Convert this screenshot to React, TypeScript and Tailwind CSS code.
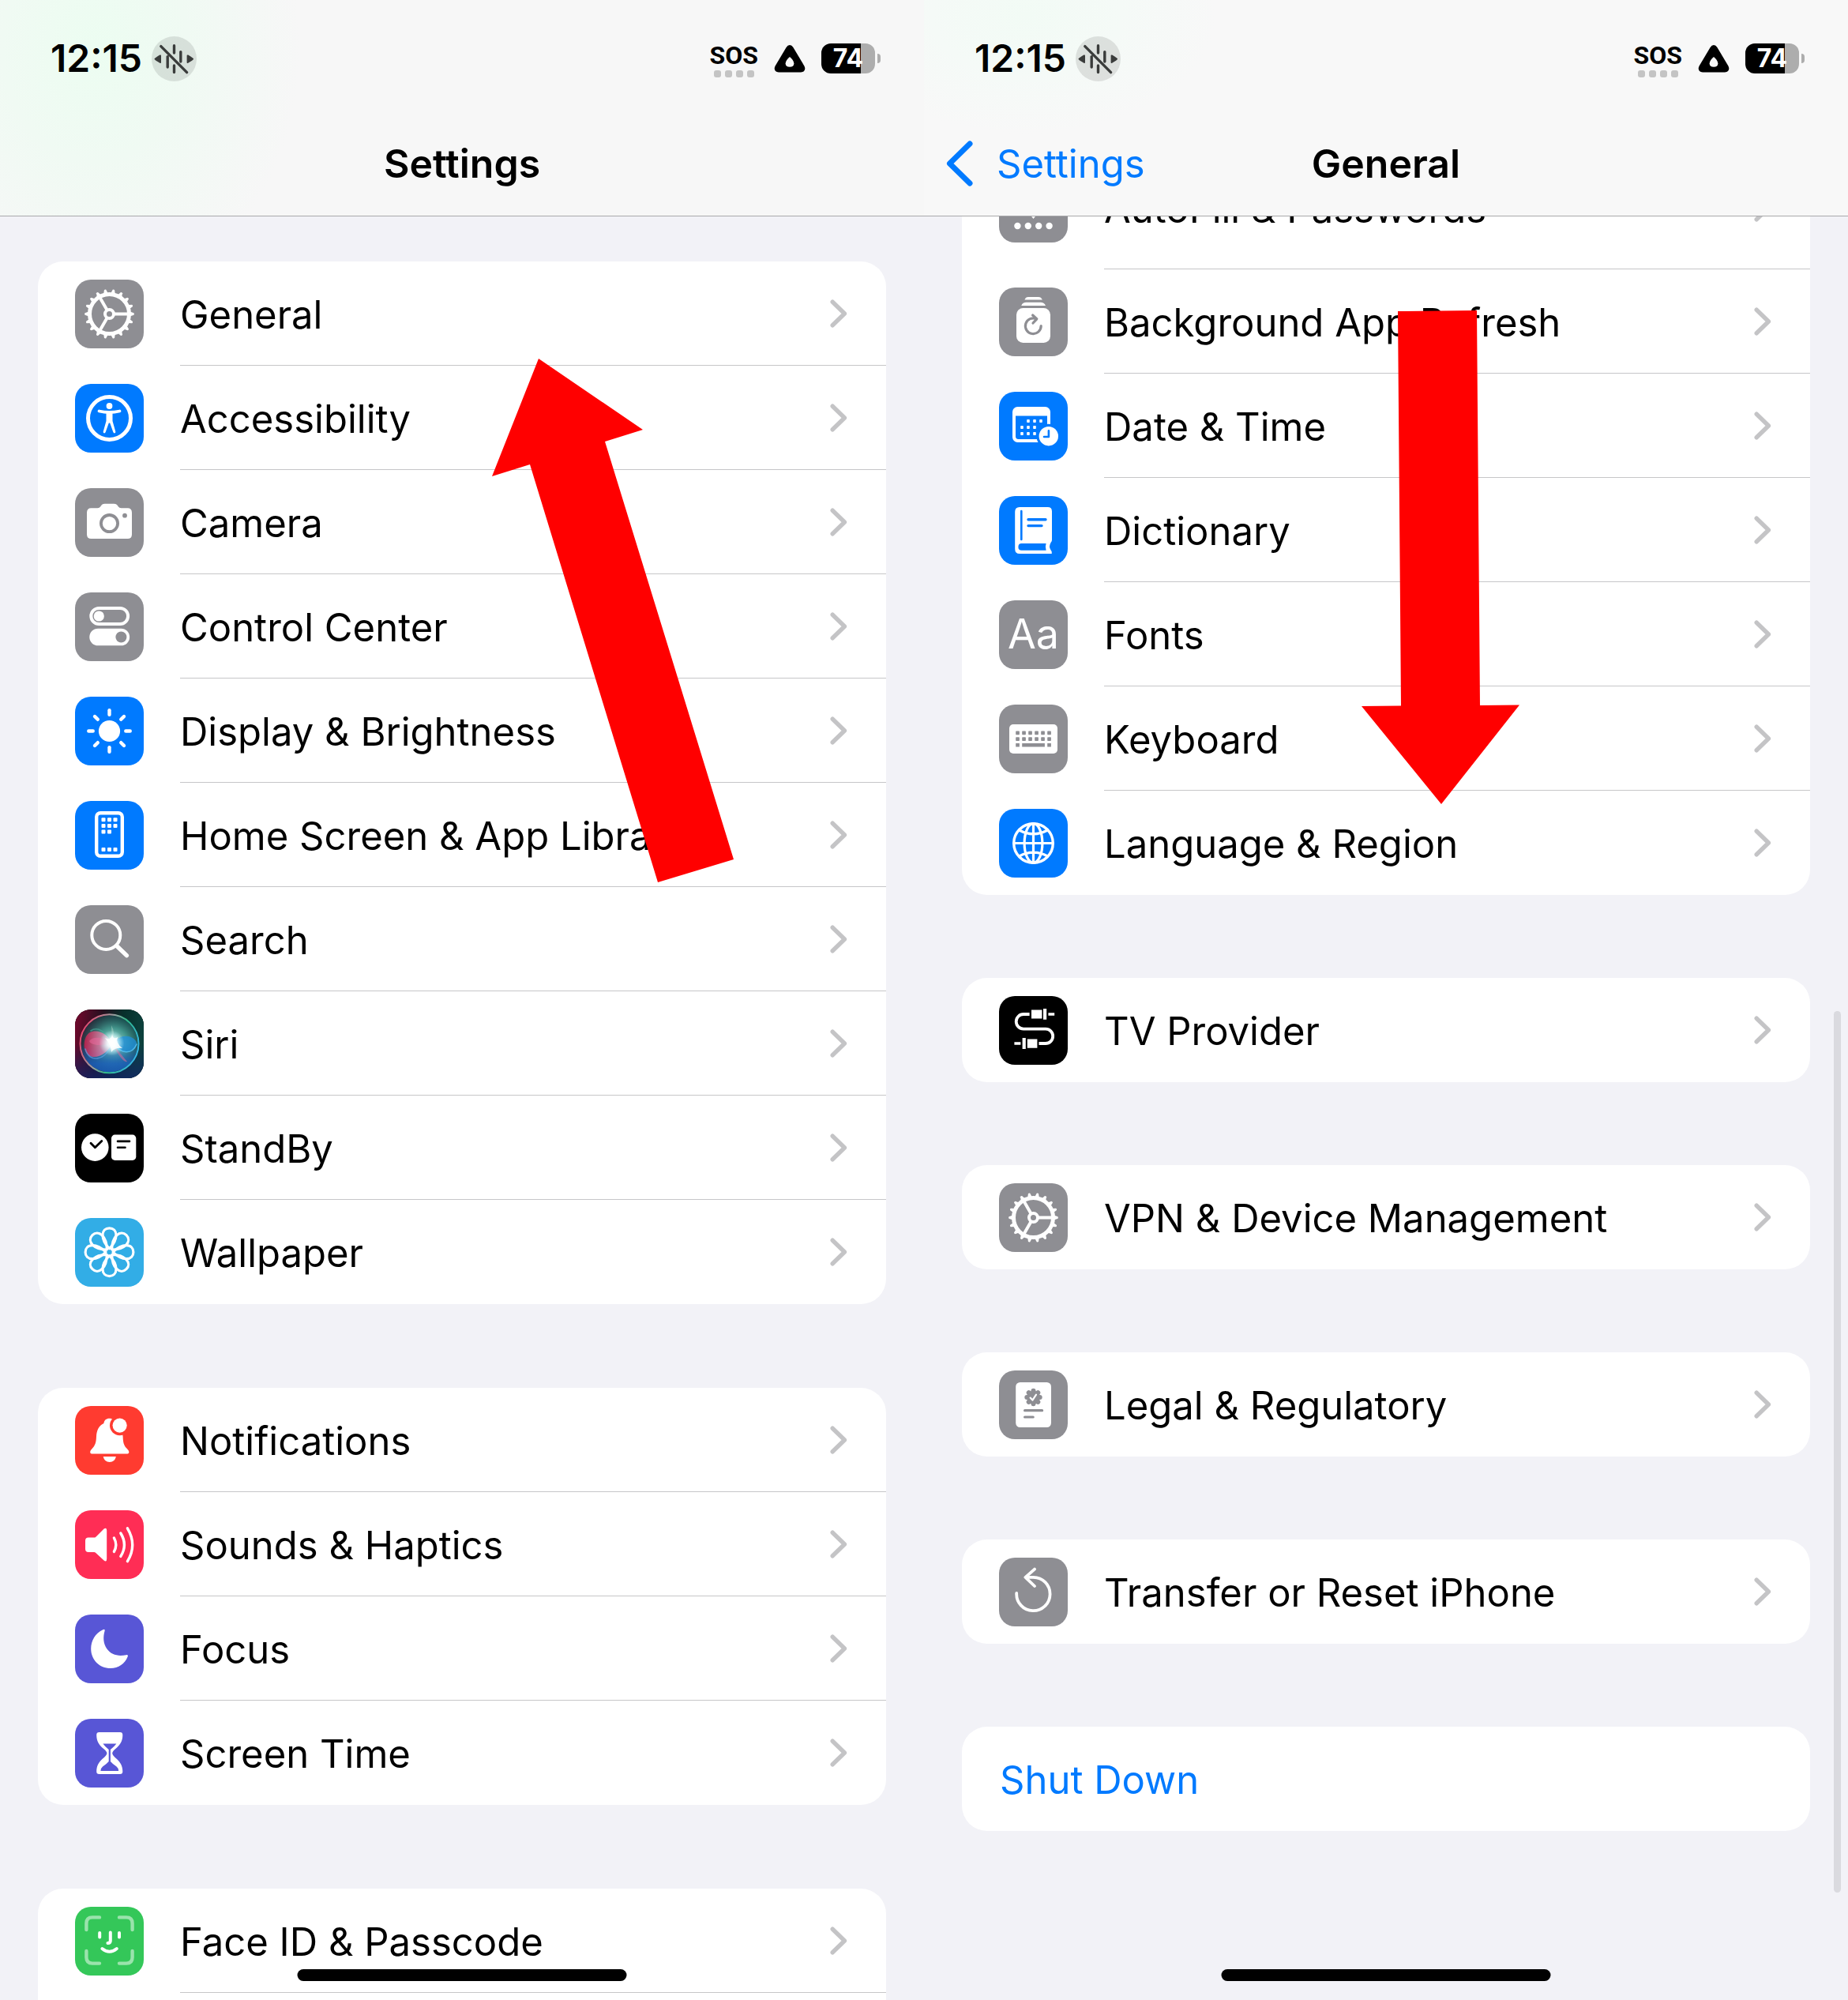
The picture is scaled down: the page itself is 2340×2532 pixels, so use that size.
import type { ReactNode } from "react";

/* ---------- Glyphs, all drawn on an 87 x 87 tile ---------- */

function Glyph({ children }: { children: ReactNode }) {
  return (
    <svg viewBox="0 0 87 87" className="size-full" fill="none" stroke="none" strokeLinecap="round" strokeLinejoin="round" aria-hidden="true">
      {children}
    </svg>
  );
}

const TEETH = Array.from({ length: 18 }, (_, i) => i * 20);
const PETALS = Array.from({ length: 8 }, (_, i) => i * 45);

const GearGlyph = () => (
  <Glyph>
    <g transform="translate(43.5 43.5)" stroke="#fff">
      <circle r="25" strokeWidth="5" />
      <circle r="5.5" strokeWidth="4" />
      {TEETH.map((a) => (
        <path key={a} d="M26 -2.9 L31 -1.2 Q31.8 0 31 1.2 L26 2.9Z" fill="#fff" stroke="none" transform={`rotate(${a})`} />
      ))}
      {[0, 120, 240].map((a) => (
        <path key={a} d="M7 0 H24" strokeWidth="4" transform={`rotate(${a})`} />
      ))}
    </g>
  </Glyph>
);

const AccessibilityGlyph = () => (
  <Glyph>
    <circle cx="43.5" cy="43.5" r="27" stroke="#fff" strokeWidth="5" />
    <circle cx="43.5" cy="28" r="3.9" fill="#fff" />
    <path d="M30.5 34.5 Q43.5 37.5 56.5 34.5" stroke="#fff" strokeWidth="3.8" />
    <path d="M39.5 35.5 H47.5 V47 L51.3 60.5 Q51.6 62.3 50 62.4 Q48.8 62.4 48.3 61 L44.2 49.5 H42.8 L38.7 61 Q38.2 62.4 37 62.4 Q35.4 62.3 35.7 60.5 L39.5 47Z" fill="#fff" />
  </Glyph>
);

const CameraGlyph = () => (
  <Glyph>
    <path d="M20.5 25.3 H28.5 Q31 25.3 32.3 23.3 L33.3 21.8 Q34.6 19.8 37.5 19.8 H49.5 Q52.4 19.8 53.7 21.8 L54.7 23.3 Q56 25.3 58.5 25.3 H66.5 Q72 25.3 72 31 V58.5 Q72 64 66.5 64 H20.5 Q15 64 15 58.5 V31 Q15 25.3 20.5 25.3Z" fill="#fff" />
    <circle cx="43.5" cy="44.6" r="10.6" stroke="#8e8e93" strokeWidth="3.8" />
    <circle cx="63" cy="34.7" r="2.9" fill="#8e8e93" />
  </Glyph>
);

const ControlGlyph = () => (
  <Glyph>
    <rect x="20.3" y="20" width="46.8" height="20" rx="10" stroke="#fff" strokeWidth="4" />
    <circle cx="30.3" cy="30" r="6.6" fill="#fff" />
    <rect x="18.3" y="45.7" width="50.8" height="21.6" rx="10.8" fill="#fff" />
    <circle cx="58.4" cy="56.5" r="7" fill="#8e8e93" />
  </Glyph>
);

const SunGlyph = () => (
  <Glyph>
    <circle cx="43.5" cy="43.5" r="13.6" fill="#fff" />
    {PETALS.map((a) => (
      <path key={a} d="M43.5 17.3 V22.7" stroke="#fff" strokeWidth="4.4" transform={`rotate(${a} 43.5 43.5)`} />
    ))}
  </Glyph>
);

const HOME_DOTS: [number, number][] = [
  [33.5, 21.3], [41, 21.3], [48.5, 21.3],
  [33.5, 29], [41, 29], [48.5, 29],
  [33.5, 36.6], [41, 36.6],
  [33.5, 59], [41, 59], [48.5, 59],
];

const HomeScreenGlyph = () => (
  <Glyph>
    <rect x="27.2" y="15.2" width="32.6" height="54.6" rx="5" stroke="#fff" strokeWidth="4.4" />
    {HOME_DOTS.map(([x, y]) => (
      <rect key={`${x}-${y}`} x={x} y={y} width="5" height="5" rx="1" fill="#fff" />
    ))}
  </Glyph>
);

const SearchGlyph = () => (
  <Glyph>
    <circle cx="39.3" cy="37.9" r="18" stroke="#fff" strokeWidth="4" />
    <path d="M53 51.8 L65.4 63.6" stroke="#fff" strokeWidth="5.4" />
  </Glyph>
);

const SiriGlyph = () => (
  <Glyph>
    <defs>
      <linearGradient id="siriBack" x1="0" y1="0" x2="1" y2="0.15">
        <stop offset="0" stopColor="#76082d" />
        <stop offset="0.4" stopColor="#25101f" />
        <stop offset="0.7" stopColor="#07302b" />
        <stop offset="1" stopColor="#0c403c" />
      </linearGradient>
      <linearGradient id="siriLow" x1="0" y1="0" x2="0" y2="1">
        <stop offset="0.5" stopColor="#12246b" stopOpacity="0" />
        <stop offset="1" stopColor="#12246b" stopOpacity="0.75" />
      </linearGradient>
      <linearGradient id="siriRing" x1="0" y1="0.3" x2="1" y2="0.7">
        <stop offset="0" stopColor="#e8456f" />
        <stop offset="0.4" stopColor="#9aa0a0" />
        <stop offset="0.62" stopColor="#2fb98a" />
        <stop offset="1" stopColor="#37b4ee" />
      </linearGradient>
      <radialGradient id="siriOrb" cx="0.56" cy="0.5" r="0.55">
        <stop offset="0" stopColor="#b8e6e6" />
        <stop offset="0.5" stopColor="#459a90" stopOpacity="0.95" />
        <stop offset="1" stopColor="#14424a" stopOpacity="0.6" />
      </radialGradient>
      <linearGradient id="siriOrbLow" x1="0" y1="0" x2="0" y2="1">
        <stop offset="0.5" stopColor="#1b62c9" stopOpacity="0" />
        <stop offset="0.85" stopColor="#1b62c9" stopOpacity="0.75" />
      </linearGradient>
      <linearGradient id="siriPink" x1="0" y1="0" x2="1" y2="0">
        <stop offset="0" stopColor="#e8184f" />
        <stop offset="1" stopColor="#f7b0d6" />
      </linearGradient>
      <radialGradient id="siriFlare">
        <stop offset="0" stopColor="#fff" />
        <stop offset="0.35" stopColor="#f2ffff" stopOpacity="0.9" />
        <stop offset="1" stopColor="#bff" stopOpacity="0" />
      </radialGradient>
    </defs>
    <rect width="87" height="87" fill="url(#siriBack)" />
    <rect width="87" height="87" fill="url(#siriLow)" />
    <circle cx="43.5" cy="43.3" r="36" fill="url(#siriOrb)" />
    <circle cx="43.5" cy="43.3" r="36" fill="url(#siriOrbLow)" />
    <path d="M47 43 C42 32 30 24 19 29 C10 34 9 52 17 58 C27 64 41 56 47 43Z" fill="url(#siriPink)" opacity="0.7" />
    <path d="M47 43 C36 34 22 34 18 40 C20 46 34 46 47 43Z" fill="#f06aa0" opacity="0.5" />
    <path d="M13 50 C18 68 38 66 47 43" stroke="#5c9de0" strokeWidth="1.6" opacity="0.7" />
    <path d="M20 27 C28 21 40 28 47 43" stroke="#49a596" strokeWidth="1.6" opacity="0.7" />
    <path d="M48 43 C57 30 74 32 78 42 C79 52 62 61 48 43Z" fill="#1f8fdc" opacity="0.75" />
    <path d="M50 44 C58 56 72 58 78 44" stroke="#58c6f7" strokeWidth="1.6" opacity="0.8" />
    <path d="M47 43 L66 66 Q60 68 47 43Z" fill="#c06a9d" opacity="0.65" />
    <path d="M47 43 L46 20 Q52 30 47 43Z" fill="#b9d9cc" opacity="0.45" />
    <circle cx="43.5" cy="43.3" r="37" stroke="url(#siriRing)" strokeWidth="2" />
    <circle cx="46.5" cy="42.5" r="16" fill="url(#siriFlare)" />
    <path d="M38 36 Q46 40 47 31 Q48 39 54 35 Q51 42 60 49 Q50 48 46 54 Q46 46 38 36Z" fill="#fff" opacity="0.85" />
  </Glyph>
);

const StandByGlyph = () => (
  <Glyph>
    <circle cx="25.3" cy="42.6" r="17.3" fill="#fff" />
    <path d="M20 37.2 L25.4 42.8 L33.8 34.4" stroke="#000" strokeWidth="2.8" />
    <rect x="46" y="26.6" width="31.3" height="32.3" rx="4.5" fill="#fff" />
    <path d="M54 34.9 H69 M54 42.7 H63.5" stroke="#000" strokeWidth="2.6" />
  </Glyph>
);

const FlowerGlyph = () => (
  <Glyph>
    <g transform="translate(43.5 43.2)" stroke="#fff" strokeWidth="3.2">
      {PETALS.map((a) => (
        <path key={a} d="M0 -4.5 C-4.5 -9 -8.5 -15 -8.5 -21.5 C-8.5 -27 -5 -30.4 0 -30.4 C5 -30.4 8.5 -27 8.5 -21.5 C8.5 -15 4.5 -9 0 -4.5Z" transform={`rotate(${a})`} />
      ))}
      <circle r="4.8" strokeWidth="2.4" />
    </g>
  </Glyph>
);

const BellGlyph = () => (
  <Glyph>
    <path d="M43.5 15.8 C39.5 15.8 37 18 36.4 22 C30 25 27.4 31 27 38.5 C26.6 47 25.6 49.5 21.6 54 C20 55.8 19.2 57 19.2 58.4 C19.2 59.8 20.4 60.6 22 60.6 H65.5 C67.2 60.6 68.3 59.8 68.3 58.4 C68.3 57 67.4 55.8 65.8 54 C61.6 49.5 61 47 60.6 38.5 C60 31 57 25 50.6 22 C50 18 47.5 15.8 43.5 15.8Z" fill="#fff" />
    <circle cx="56.6" cy="24.6" r="12.6" fill="#ff3b30" />
    <circle cx="56.6" cy="24.6" r="9.1" fill="#fff" />
    <path d="M35.7 64 H51.9 Q50.4 71 43.8 71 Q37.2 71 35.7 64Z" fill="#fff" />
  </Glyph>
);

const SpeakerGlyph = () => (
  <Glyph>
    <path d="M17 34.6 H24 Q25.4 34.6 26.6 33.4 L36.6 23.6 Q40.2 21.4 40.2 25.6 V61.6 Q40.2 66 36.6 63.6 L26.6 54.2 Q25.4 53 24 53 H17 Q13 53 13 49 V38.6 Q13 34.6 17 34.6Z" fill="#fff" />
    <path d="M49.4 35 Q54.2 43.8 49.4 52.4 M57.8 29 Q67 43.8 57.8 58.4 M66.4 22.8 Q79 43.8 66.4 64.6" stroke="#fff" strokeWidth="3.4" />
  </Glyph>
);

const MoonGlyph = () => (
  <Glyph>
    <path d="M37.6 20.8 C35.4 28 35.6 37 40.6 43.8 C45.6 50.6 54 53.4 64.6 51.2 Q67.8 50.6 66.6 53.6 C63 62.4 55 68 45 68 C31 68 20.2 57.4 20.2 43.2 C20.2 32.6 26 23.4 34.8 19.4 Q38.4 17.8 37.6 20.8Z" fill="#fff" />
  </Glyph>
);

const HourglassGlyph = () => (
  <Glyph>
    <path d="M30.5 17 H57 Q60.3 17 60.3 20.4 C60.3 28 57 32.6 53 36.4 Q47.2 41 47.2 43.6 Q47.2 46.4 53 51 C57 54.8 60.3 59.4 60.3 66.8 Q60.3 70 57 70 H30.5 Q27.2 70 27.2 66.8 C27.2 59.4 30.4 54.8 34.4 51 Q40.4 46.4 40.4 43.6 Q40.4 41 34.4 36.4 C30.4 32.6 27.2 28 27.2 20.4 Q27.2 17 30.5 17Z" fill="#fff" />
    <path d="M35.4 31.4 H52.4 Q50 34.6 44.9 39 V54 Q47.4 57 52.6 60.6 Q55.4 63 55.2 66 H32.4 Q32.2 63 35 60.6 Q40.2 57 42.7 54 V39 Q37.6 34.6 35.4 31.4Z" fill="#5856d6" />
  </Glyph>
);

const FaceGlyph = () => (
  <Glyph>
    <path d="M14.4 29 V21 Q14.4 13.4 22 13.4 H31 M56 13.4 H65 Q72.6 13.4 72.6 21 V29 M72.6 56 V64 Q72.6 71.6 65 71.6 H56 M31 71.6 H22 Q14.4 71.6 14.4 64 V56" stroke="#9ae3ac" strokeWidth="4.4" />
    <path d="M31.2 33 V38.4 M56 33 V38.4 M44.8 32.6 V43 Q44.8 46 41.4 46 M34.4 53 Q43.6 60.6 52.8 53" stroke="#fff" strokeWidth="4" />
  </Glyph>
);

const PasswordGlyph = () => (
  <Glyph>
    <circle cx="43.5" cy="26" r="12" fill="#fff" />
    <path d="M39.5 36 H47.5 V52 L43.5 57 L39.5 52Z" fill="#fff" />
    {[23.4, 36.8, 50.2, 63.6].map((x) => (
      <circle key={x} cx={x} cy="66" r="4.2" fill="#fff" />
    ))}
  </Glyph>
);

const RefreshGlyph = () => (
  <Glyph>
    <path d="M32.4 15.4 Q33.8 12 37 12 H50 Q53.2 12 54.8 15.4Z" fill="#fff" />
    <path d="M28.2 23 Q30 18.8 34.4 18.8 H52.6 Q57 18.8 59 23Z" fill="#fff" />
    <rect x="22" y="26" width="43" height="44" rx="8.5" fill="#fff" />
    <path d="M47.6 39.8 A9.9 9.9 0 1 0 53.2 48.6 M42.6 35 L47.8 39.8 L43 45" stroke="#8e8e93" strokeWidth="3.2" />
  </Glyph>
);

const DATE_DOTS: [number, number][] = [
  [37, 37], [45, 37], [53, 37],
  [29, 45], [37, 45], [45, 45],
  [29, 53], [37, 53], [45, 53],
];

const CalendarGlyph = () => (
  <Glyph>
    <rect x="17" y="19" width="48" height="45" rx="6.5" fill="#fff" />
    <path d="M21 30.4 H61 V60 H24.5 Q21 60 21 56.6Z" fill="#007aff" />
    {DATE_DOTS.map(([x, y]) => (
      <rect key={`${x}-${y}`} x={x - 1.8} y={y - 2} width="3.6" height="4" rx="0.8" fill="#fff" />
    ))}
    <circle cx="62.8" cy="56.2" r="15.4" fill="#007aff" />
    <circle cx="62.8" cy="56.2" r="12.2" fill="#fff" />
    <path d="M62.9 49.4 V57 H57" stroke="#007aff" strokeWidth="2.6" />
  </Glyph>
);

const BookGlyph = () => (
  <Glyph>
    <path d="M26 14 H61.6 Q67 14 67 19.4 V55.6 Q67 57.4 65.8 58.6 Q62.4 64 65.6 68.6 Q67.2 70 66.8 73 H26 Q20.2 73 20.2 67 V20 Q20.2 14 26 14Z" fill="#fff" />
    <path d="M28.3 19 V55" stroke="#007aff" strokeWidth="2.6" />
    <path d="M37 29.8 H59 M37 37.6 H54" stroke="#007aff" strokeWidth="3.4" />
    <path d="M28.6 60 H59.6 Q58 64.4 59.6 68.8 H28.6 Q24.4 68.8 24.4 64.4 Q24.4 60 28.6 60Z" fill="#007aff" />
  </Glyph>
);

const KEY_COLUMNS = [21.2, 29.2, 37.2, 45.2, 53.2, 61.2];

const KeyboardGlyph = () => (
  <Glyph>
    <rect x="13" y="25" width="61" height="37" rx="5" fill="#fff" />
    {KEY_COLUMNS.map((x) => (
      <g key={x} fill="#8e8e93">
        <rect x={x} y="33.6" width="4.7" height="4.7" rx="0.8" />
        <rect x={x} y="41.3" width="4.7" height="4.7" rx="0.8" />
      </g>
    ))}
    <path d="M21.2 49 h4.7 v4.6 h-4.7z M29.2 49 h28.7 v4.6 h-28.7z M61.2 49 h4.7 v4.6 h-4.7z" fill="#8e8e93" />
  </Glyph>
);

const GlobeGlyph = () => (
  <Glyph>
    <g stroke="#fff" strokeWidth="3.2">
      <circle cx="43.5" cy="43.5" r="24.8" strokeWidth="3.4" />
      <ellipse cx="43.5" cy="43.5" rx="11.4" ry="24.8" />
      <path d="M43.5 18.7 V68.3 M18.7 43.5 H68.3 M25.6 27 Q43.5 36.6 61.4 27 M25.6 60 Q43.5 50.4 61.4 60" />
    </g>
  </Glyph>
);

const CableGlyph = () => (
  <Glyph>
    <path d="M38.6 23 H31 A9.3 9.3 0 0 0 31 41.6 H59 A9.2 9.2 0 0 1 59 60 H50.5" stroke="#fff" strokeWidth="3.8" strokeLinecap="butt" />
    <path d="M41 17.6 h13.4 v10.8 h-13.4z M56 16 h4.2 v13.8 h-4.2z M62.4 21.2 h7.8 v3.6 h-7.8z M35.8 54.6 h12.6 v11.2 h-12.6z M29.6 53 h4.2 v14 h-4.2z M19.4 58.2 h8 v3.6 h-8z" fill="#fff" />
  </Glyph>
);

const LegalGlyph = () => (
  <Glyph>
    <rect x="21.2" y="15" width="44.8" height="57" rx="5.5" fill="#fff" />
    <circle cx="43.5" cy="34" r="8.6" fill="#8e8e93" />
    {PETALS.map((a) => (
      <circle key={a} cx="43.5" cy="25.8" r="3" fill="#8e8e93" transform={`rotate(${a} 43.5 34)`} />
    ))}
    <path d="M39.6 34.6 L42.4 37.6 L47 30.6" stroke="#fff" strokeWidth="2.2" />
    <path d="M32.6 50.7 H54.6 M32.6 59 H43.2" stroke="#8e8e93" strokeWidth="3.2" />
  </Glyph>
);

const ResetGlyph = () => (
  <Glyph>
    <path d="M33.5 24.8 H43.5 A21.2 21.2 0 1 1 22.2 45 M45 14.6 L33.4 24.9 L45 36" stroke="#fff" strokeWidth="3.8" />
  </Glyph>
);

/* ---------- List pieces ---------- */

type Item = { label: string; tile: string; glyph: ReactNode };

function Chevron() {
  return (
    <svg viewBox="0 0 22 36" className="h-9 w-[22px] shrink-0" fill="none" aria-hidden="true">
      <path d="M3.2 3.2 L18.4 18 L3.2 32.8" stroke="#c4c4c6" strokeWidth="5.4" strokeLinecap="round" strokeLinejoin="round" />
    </svg>
  );
}

function Row({ item, tall = false }: { item: Item; tall?: boolean }) {
  return (
    <li className="group">
      <a href="#" className={tall ? "flex h-36 gap-[46px] pl-[47px]" : "flex h-[132px] gap-[46px] pl-[47px]"}>
        <span className="flex h-[132px] shrink-0 items-center">
          <span className={`flex size-[87px] items-center justify-center overflow-hidden rounded-[20px] ${item.tile}`}>{item.glyph}</span>
        </span>
        <span className="flex min-w-0 flex-1 border-b border-[#c6c6c8] group-last:border-transparent">
          <span className="flex h-[132px] min-w-0 flex-1 items-center justify-between pr-[49px]">
            <span className="truncate pt-[3px] leading-[64px]">{item.label}</span>
            <Chevron />
          </span>
        </span>
      </a>
    </li>
  );
}

type CardProps = { items: Item[]; tallFirst?: boolean; continues?: boolean };

function Card({ items, tallFirst = false, continues = false }: CardProps) {
  return (
    <ul className="overflow-hidden rounded-[32px] bg-white">
      {items.map((item, i) => (
        <Row key={item.label} item={item} tall={tallFirst && i === 0} />
      ))}
      {continues && <li aria-hidden="true" className="h-[132px]" />}
    </ul>
  );
}

function StatusBar() {
  return (
    <div className="flex h-[148px] items-center justify-between pr-[55px] pl-16">
      <div className="flex items-center gap-3">
        <time className="text-[48px] leading-none font-semibold">12:15</time>
        <svg viewBox="0 0 57 57" className="size-[57px]" fill="none" aria-label="Sound recognition off">
          <circle cx="28.5" cy="28.5" r="28.5" fill="#000" opacity="0.1" />
          <g stroke="#3a3c3b" strokeWidth="3.4" strokeLinecap="round">
            <path d="M11.8 12.6 L44.6 45.6 M28.5 11.8 V21 M36.8 19.6 V32 M20.2 25.6 V39 M28.5 37 V45.6" />
          </g>
          <path d="M3.4 28.8 Q4 27.4 10.4 23.6 Q12 23 12 24.6 V33 Q12 34.4 10.4 33.8 Q4 30.2 3.4 28.8Z M53.2 28.8 Q52.6 27.4 46.2 23.6 Q44.6 23 44.6 24.6 V33 Q44.6 34.4 46.2 33.8 Q52.6 30.2 53.2 28.8Z" fill="#3a3c3b" />
        </svg>
      </div>
      <div className="flex items-center gap-5">
        <div className="flex flex-col items-center gap-1 pt-1">
          <span className="font-[Roboto,sans-serif] text-[32px] leading-[30px] font-bold">SOS</span>
          <span className="flex gap-[5px]">
            <i className="size-[9px] rounded-[3px] bg-[#c4c4c4]" />
            <i className="size-[9px] rounded-[3px] bg-[#c4c4c4]" />
            <i className="size-[9px] rounded-[3px] bg-[#c4c4c4]" />
            <i className="size-[9px] rounded-[3px] bg-[#c4c4c4]" />
          </span>
        </div>
        <svg viewBox="0 0 40 36" className="h-9 w-10" aria-label="Satellite">
          <path d="M20 1 Q22.6 1 24.4 4 L38.4 27.4 Q40.4 31.4 38 34 Q36.8 35.4 34 35.4 H6 Q3.2 35.4 2 34 Q-0.4 31.4 1.6 27.4 L15.6 4 Q17.4 1 20 1Z" />
          <path d="M20 16 Q25.4 20.6 25.4 24.4 Q25 28.8 20 28.8 Q15 28.8 14.6 24.4 Q14.6 20.6 20 16Z" fill="#f8f8f8" />
        </svg>
        <div className="flex items-center gap-[3px]" role="img" aria-label="Battery 74 percent">
          <span className="flex h-[38px] w-[68px] items-center justify-center overflow-hidden rounded-xl bg-linear-to-r from-black from-74% to-[#adadad] to-74% text-[32px] leading-none font-bold text-white">
            74
          </span>
          <i className="h-3 w-1 rounded-r-full bg-[#adadad]" />
        </div>
      </div>
    </div>
  );
}

function HomeIndicator() {
  return <div className="absolute bottom-6 left-1/2 z-20 h-[15px] w-[417px] -translate-x-1/2 rounded-full bg-black" />;
}

/* ---------- Data ---------- */

const gray = "bg-[#8e8e93]";
const blue = "bg-[#007aff]";

const mainItems: Item[] = [
  { label: "General", tile: gray, glyph: <GearGlyph /> },
  { label: "Accessibility", tile: blue, glyph: <AccessibilityGlyph /> },
  { label: "Camera", tile: gray, glyph: <CameraGlyph /> },
  { label: "Control Center", tile: gray, glyph: <ControlGlyph /> },
  { label: "Display & Brightness", tile: blue, glyph: <SunGlyph /> },
  { label: "Home Screen & App Library", tile: blue, glyph: <HomeScreenGlyph /> },
  { label: "Search", tile: gray, glyph: <SearchGlyph /> },
  { label: "Siri", tile: "bg-black", glyph: <SiriGlyph /> },
  { label: "StandBy", tile: "bg-black", glyph: <StandByGlyph /> },
  { label: "Wallpaper", tile: "bg-[#32ade6]", glyph: <FlowerGlyph /> },
];

const alertItems: Item[] = [
  { label: "Notifications", tile: "bg-[#ff3b30]", glyph: <BellGlyph /> },
  { label: "Sounds & Haptics", tile: "bg-[#ff2d55]", glyph: <SpeakerGlyph /> },
  { label: "Focus", tile: "bg-[#5856d6]", glyph: <MoonGlyph /> },
  { label: "Screen Time", tile: "bg-[#5856d6]", glyph: <HourglassGlyph /> },
];

const securityItems: Item[] = [{ label: "Face ID & Passcode", tile: "bg-[#34c759]", glyph: <FaceGlyph /> }];

const generalItems: Item[] = [
  { label: "AutoFill & Passwords", tile: gray, glyph: <PasswordGlyph /> },
  { label: "Background App Refresh", tile: gray, glyph: <RefreshGlyph /> },
  { label: "Date & Time", tile: blue, glyph: <CalendarGlyph /> },
  { label: "Dictionary", tile: blue, glyph: <BookGlyph /> },
  { label: "Fonts", tile: gray, glyph: <span className="text-[52px] leading-none text-white">Aa</span> },
  { label: "Keyboard", tile: gray, glyph: <KeyboardGlyph /> },
  { label: "Language & Region", tile: blue, glyph: <GlobeGlyph /> },
];

const singleItems: Item[] = [
  { label: "TV Provider", tile: "bg-black", glyph: <CableGlyph /> },
  { label: "VPN & Device Management", tile: gray, glyph: <GearGlyph /> },
  { label: "Legal & Regulatory", tile: gray, glyph: <LegalGlyph /> },
  { label: "Transfer or Reset iPhone", tile: gray, glyph: <ResetGlyph /> },
];

/* ---------- Screens ---------- */

function SettingsScreen() {
  return (
    <section className="relative flex h-full min-w-0 flex-col overflow-hidden">
      <header className="z-10 shrink-0 border-b border-[#a9a9ab] bg-[#f7f7f7] bg-[radial-gradient(ellipse_260px_320px_at_120px_60px,#ecfdf1_0%,#f0faf3_45%,transparent_100%)] pb-[7px]">
        <StatusBar />
        <div className="flex h-[118px] items-center justify-center">
          <h1 className="text-[50px] leading-none font-semibold">Settings</h1>
        </div>
      </header>
      <main className="flex flex-col gap-[106px] px-12 pt-[57px]">
        <Card items={mainItems} />
        <Card items={alertItems} />
        <Card items={securityItems} continues />
      </main>
      <svg viewBox="0 0 308 666" className="pointer-events-none absolute top-[453px] left-[622px] w-[308px]" aria-hidden="true">
        <path d="M60 1 L192 91 L144 106 L307 635 L211 664 L49 135 L1 150Z" fill="#f00" />
      </svg>
      <HomeIndicator />
    </section>
  );
}

function GeneralScreen() {
  return (
    <section className="relative flex h-full min-w-0 flex-col overflow-hidden">
      <header className="z-10 shrink-0 border-b border-[#a9a9ab] bg-[#f8f8f8] bg-[radial-gradient(ellipse_240px_150px_at_130px_20px,#f2fbf5_0%,#f5faf7_50%,transparent_100%)] pb-[7px]">
        <StatusBar />
        <div className="grid h-[118px] grid-cols-[1fr_auto_1fr] items-center">
          <a href="#" className="flex items-center gap-[30px] pl-7 text-[#007aff]">
            <svg viewBox="0 0 34 58" className="h-[58px] w-[34px]" fill="none" aria-hidden="true">
              <path d="M30 4 L4.5 29 L30 54" stroke="#007aff" strokeWidth="7" strokeLinecap="round" strokeLinejoin="round" />
            </svg>
            <span className="leading-none">Settings</span>
          </a>
          <h1 className="text-[50px] leading-none font-semibold">General</h1>
        </div>
      </header>
      <main className="-mt-[77px] flex flex-col gap-[105px] px-12">
        <Card items={generalItems} tallFirst />
        {singleItems.map((item) => (
          <Card key={item.label} items={[item]} />
        ))}
        <button type="button" className="h-[132px] rounded-[32px] bg-white pt-[3px] pl-12 text-left text-[#007aff]">
          Shut Down
        </button>
      </main>
      <svg viewBox="0 0 202 626" className="pointer-events-none absolute top-[393px] left-[554px] z-10 w-[202px]" aria-hidden="true">
        <path d="M46 1 L146 0 L150 500 L200 499.500 L101 625 L0 501 L50 500.500Z" fill="#f00" />
      </svg>
      <div className="absolute top-[1280px] right-[9px] bottom-[136px] w-[9px] rounded-full bg-[#dadadf]" />
      <HomeIndicator />
    </section>
  );
}

export default function App() {
  return (
    <div className="grid h-screen grid-cols-2 overflow-hidden bg-[#f2f2f7] font-[Inter,sans-serif] text-[49px] text-black">
      <SettingsScreen />
      <GeneralScreen />
    </div>
  );
}
